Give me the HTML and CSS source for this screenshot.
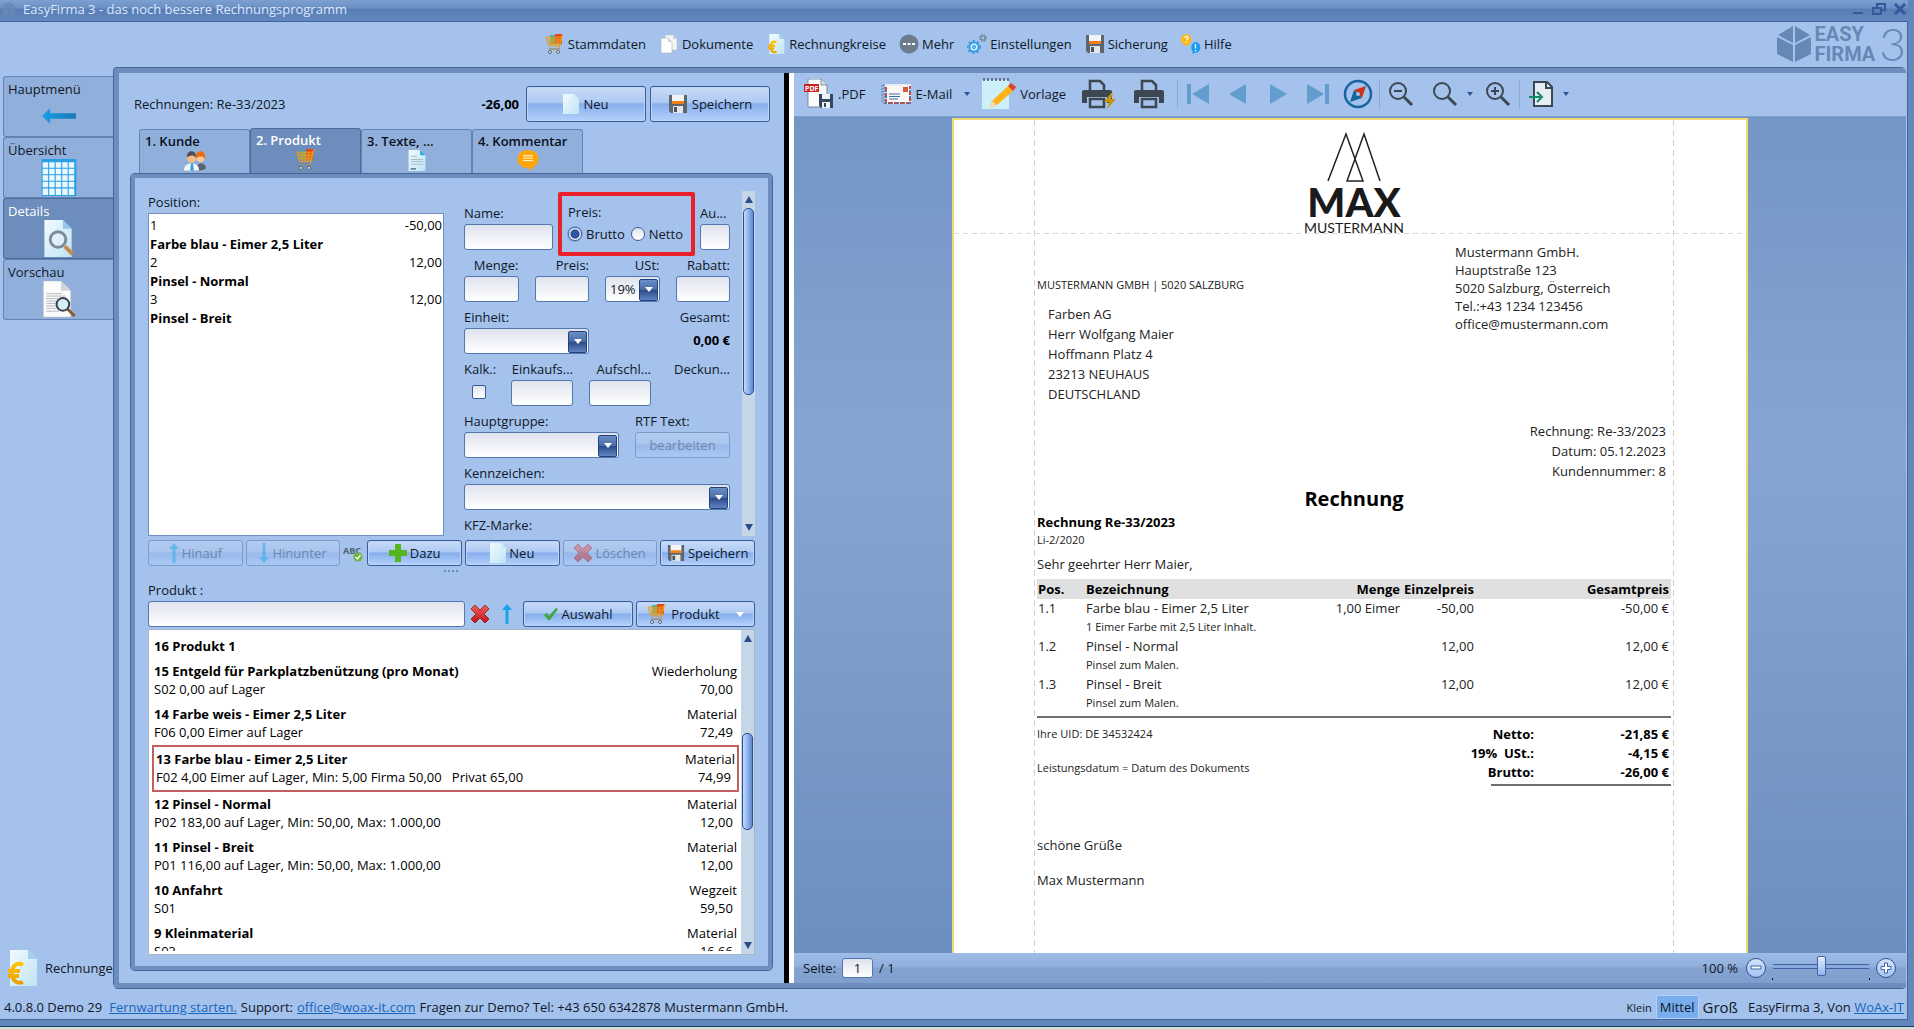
FILE: index.html
```html
<!DOCTYPE html>
<html lang="de">
<head>
    <meta charset="UTF-8">
    <meta name="viewport" content="width=device-width, initial-scale=1.0">
    <title>EasyFirma 3 - das noch bessere Rechnungsprogramm</title>
    <link rel="stylesheet" href="styles.css">
</head>
<body>
    <!-- Icons -->
    <svg class="sprite" width="0" height="0" aria-hidden="true">
        <defs>
            <linearGradient id="g-paper" x1="0" y1="0" x2="1" y2="1">
                <stop offset="0" stop-color="#f2fbff"/>
                <stop offset="1" stop-color="#bfe3f5"/>
            </linearGradient>
            <linearGradient id="g-gold" x1="0" y1="0" x2="0" y2="1">
                <stop offset="0" stop-color="#ffc400"/>
                <stop offset="1" stop-color="#e8a200"/>
            </linearGradient>
            <linearGradient id="g-arrow" x1="0" y1="0" x2="1" y2="0">
                <stop offset="0" stop-color="#1a9ee8"/>
                <stop offset="1" stop-color="#1679b8"/>
            </linearGradient>
            <linearGradient id="g-red" x1="0" y1="0" x2="0" y2="1">
                <stop offset="0" stop-color="#f0605c"/>
                <stop offset="1" stop-color="#c01414"/>
            </linearGradient>
        </defs>
        <symbol id="i-cart" viewBox="0 0 20 20">
            <path d="M5 1h6v9H5z" fill="#2fb3b0"/>
            <path d="M10 0h7v10h-7z" fill="#e8441c"/>
            <path d="M1 3h16l-2 9H4z" fill="#f5a623" fill-opacity=".35"/>
            <path d="M1 3h16l-2 9H4zM3 6h13M3 9h12M6 3l1 9M9 3v9M13 3l-1 9M19 1h-2l-3 14H4" fill="none" stroke="#e89a1c" stroke-width=".9"/>
            <path d="M4 15h11" stroke="#7b8794"/>
            <circle cx="5" cy="18" r="1.500" fill="#e6e9ed" stroke="#5b6672"/>
            <circle cx="13" cy="18" r="1.500" fill="#e6e9ed" stroke="#5b6672"/>
        </symbol>
        <symbol id="i-copy" viewBox="0 0 20 20">
            <path d="M6 1h8l4 4v11H6z" fill="#f4f5f6" stroke="#b5bac0" stroke-width=".6"/>
            <path d="M2 4h7l4 4v11H2z" fill="#fff" stroke="#a9afb6" stroke-width=".6"/>
            <path d="M9 4v4h4zM14 1v4h4z" fill="#cfd4da"/>
        </symbol>
        <symbol id="i-euro" viewBox="0 0 30 36">
            <path d="M3 0h18l9 9v27H3z" fill="url(#g-paper)"/>
            <path d="M21 0l9 9h-9z" fill="#9fd2ef"/>
            <path d="M16 15c-8-4-11 3-11 8s3 12 11 9M1 21h12M1 26h11" fill="none" stroke="url(#g-gold)" stroke-width="4"/>
        </symbol>
        <symbol id="i-more" viewBox="0 0 20 20">
            <circle cx="10" cy="10" r="9.500" fill="#6d7b8d"/>
            <path d="M4 9h3v2H4zM8.500 9h3v2h-3zM13 9h3v2h-3z" fill="#fff"/>
        </symbol>
        <symbol id="i-gears" viewBox="0 0 20 20">
            <circle cx="7" cy="13" r="4.500" fill="none" stroke="#2d9be0" stroke-width="2"/>
            <circle cx="7" cy="13" r="6.300" fill="none" stroke="#2d9be0" stroke-width="1.400" stroke-dasharray="2.300 2.300"/>
            <circle cx="7" cy="13" r="3.500" fill="#d6efff"/>
            <circle cx="7" cy="13" r="1.600" fill="#a4c2ec" stroke="#2d9be0"/>
            <circle cx="16" cy="4" r="2.200" fill="none" stroke="#76899e" stroke-width="1.600"/>
            <circle cx="16" cy="4" r="3.400" fill="none" stroke="#76899e" stroke-width="1.200" stroke-dasharray="1.400 1.300"/>
        </symbol>
        <symbol id="i-floppy" viewBox="0 0 20 20">
            <path d="M1 1h18v18H3l-2-2z" fill="#5d6670"/>
            <path d="M4 1h12v9H4z" fill="#f1f3f5"/>
            <path d="M4 7h12v3H4z" fill="#ef7d1a"/>
            <path d="M5 12h10v7H5z" fill="#e3e6ea"/>
            <path d="M6 13h3v5H6z" fill="#4b535c"/>
        </symbol>
        <symbol id="i-page" viewBox="0 0 16 20">
            <path d="M0 0h11l5 5v15H0z" fill="url(#g-paper)"/>
            <path d="M11 0l5 5h-5z" fill="#cfeaf8"/>
        </symbol>
        <symbol id="i-text" viewBox="0 0 16 20">
            <path d="M0 0h11l5 5v15H0z" fill="url(#g-paper)"/>
            <path d="M11 0l5 5h-5z" fill="#2aa7e6"/>
            <path d="M2 6h6M2 9h12M2 11h12M2 13.500h12" stroke="#9bb4c4" stroke-width=".8"/>
            <path d="M2 18h5" stroke="#31424f"/>
        </symbol>
        <symbol id="i-people" viewBox="0 0 22 20">
            <path d="M12 20c0-5 2-7 5-7s5 2 5 5c-3 2-6 2-10 2z" fill="#59636e"/>
            <circle cx="16.500" cy="7" r="4.500" fill="#fbc995"/>
            <path d="M12 6c0-7 9-7 9 0v3l-2-3-4 0-3 2z" fill="#f06a0c"/>
            <path d="M0 20c0-5 3-7 7.500-7s7.500 2 7.500 7z" fill="#f3f7fa"/>
            <path d="M7 13h2l.8 7H6.200z" fill="#2b9de0"/>
            <circle cx="7.500" cy="7.500" r="4.500" fill="#f7bb84"/>
            <path d="M3 6c0-7 9-7 9 0l-1 1c0-3-7-2-7 0z" fill="#4d4f55"/>
        </symbol>
        <symbol id="i-comment" viewBox="0 0 22 22">
            <path d="M11 0C4 0 0 4 0 9.500S4 19 12 19l3 3 1-4c4-1 6-5 6-8.500C22 4 18 0 11 0z" fill="#ffa60a"/>
            <path d="M6 6h10M6 8.500h10M6 11h10" stroke="#fff"/>
        </symbol>
        <symbol id="i-left" viewBox="0 0 38 18">
            <path d="M9 0v6h29v6H9v6L0 9z" fill="url(#g-arrow)"/>
        </symbol>
        <symbol id="i-grid" viewBox="0 0 32 34">
            <path d="M0 0h32v34H0z" fill="#2a9fe6"/>
            <path d="M1 3h5v5H1zM7 3h5v5H7zM13 3h5v5h-5zM19 3h5v5h-5zM25 3h5v5h-5zM1 9h5v5H1zM7 9h5v5H7zM13 9h5v5h-5zM19 9h5v5h-5zM25 9h5v5h-5zM1 15h5v5H1zM7 15h5v5H7zM13 15h5v5h-5zM19 15h5v5h-5zM25 15h5v5h-5zM1 21h5v5H1zM7 21h5v5H7zM13 21h5v5h-5zM19 21h5v5h-5zM25 21h5v5h-5zM1 27h5v6H1zM7 27h5v6H7zM13 27h5v6h-5zM19 27h5v6h-5zM25 27h5v6h-5z" fill="#e9f8ff"/>
        </symbol>
        <symbol id="i-details" viewBox="0 0 32 38">
            <path d="M1 0h19l9 9v29H1z" fill="url(#g-paper)"/>
            <path d="M20 0l9 9h-9z" fill="#8fc8ea"/>
            <path d="M22 27l8 8" stroke="#c98a45" stroke-width="4"/>
            <circle cx="15" cy="20" r="8" fill="#dceffb" stroke="#7e8b97" stroke-width="3"/>
        </symbol>
        <symbol id="i-preview" viewBox="0 0 34 38">
            <path d="M1 0h18l10 10v27H1z" fill="#fbfbfb" stroke="#c3c8cd" stroke-width=".6"/>
            <path d="M19 0l10 10H19z" fill="#d2d6da"/>
            <path d="M4 13h16M4 15.500h20M4 18h12M4 20.500h11M4 23h10M4 25.500h10M4 28h11M4 31h13" stroke="#b4b8bd"/>
            <path d="M25 28l8 8" stroke="#8a5a34" stroke-width="3"/>
            <circle cx="21" cy="24" r="6.500" fill="#d7edf8" stroke="#38424c" stroke-width="2"/>
        </symbol>
        <symbol id="i-up" viewBox="0 0 10 20">
            <path d="M5 0l5 6H6.500v14h-3V6H0z" fill="#1aa3e8"/>
        </symbol>
        <symbol id="i-down" viewBox="0 0 10 20">
            <path d="M5 20l5-6H6.500V0h-3v14H0z" fill="#1aa3e8"/>
        </symbol>
        <symbol id="i-plus" viewBox="0 0 18 18">
            <path d="M6 0h6v6h6v6h-6v6H6v-6H0V6h6z" fill="#54b51c"/>
        </symbol>
        <symbol id="i-cross" viewBox="0 0 18 18">
            <path d="M4 0l5 5 5-5 4 4-5 5 5 5-4 4-5-5-5 5-4-4 5-5-5-5z" fill="url(#g-red)" stroke="#8d1616" stroke-width=".8"/>
        </symbol>
        <symbol id="i-check" viewBox="0 0 14 12">
            <path d="M0 7l3-2 2 3 7-8 2 1-8 11H4z" fill="#3fa83c"/>
        </symbol>
        <symbol id="i-mail" viewBox="0 0 30 22">
            <path d="M1 2v18M3 1v20" stroke="#5c7599" stroke-dasharray="2 1"/>
            <path d="M5 2h24v18H5z" fill="#fdf8f4"/>
            <path d="M5 2h24v18H5z" fill="none" stroke="#e9eef5" stroke-width="2"/>
            <path d="M5 4v16h24V2" fill="none" stroke="#c7493b" stroke-width="2" stroke-dasharray="3 3"/>
            <path d="M5 7v13h24V5" fill="none" stroke="#5078b0" stroke-width="2" stroke-dasharray="2 4"/>
            <path d="M22 4h5v5h-5z" fill="#d9573c"/>
            <path d="M8 11h11M8 13.500h11M8 16h9" stroke="#3b6ea8"/>
        </symbol>
        <symbol id="i-notepad" viewBox="0 0 34 32">
            <path d="M0 2h27v29H0z" fill="#cdeffa"/>
            <path d="M2 3V0M6 3V0M10 3V0M14 3V0M18 3V0M22 3V0M26 3V0" stroke="#4b5966" stroke-width="1.500"/>
            <path d="M8 30l2-7L26 8l5 5-16 14z" fill="#ffb31a"/>
            <path d="M26 8l3-3 5 4-3 4z" fill="#e2431e"/>
            <path d="M8 30l2-7 5 4z" fill="#f5dcb3"/>
        </symbol>
        <symbol id="i-printer" viewBox="0 0 30 30">
            <path d="M8 12V2h10l4 4v6" fill="none" stroke="#3d4752" stroke-width="2.500"/>
            <path d="M0 13q0-2 2-2h26q2 0 2 2v11h-5v-6H5v6H0z" fill="#3d4752"/>
            <path d="M8 20h14v8H8z" fill="none" stroke="#3d4752" stroke-width="2.500"/>
        </symbol>
        <symbol id="i-bolt" viewBox="0 0 12 16">
            <path d="M7 0L0 9h5l-2 7 9-10H7l2-6z" fill="#c79410"/>
        </symbol>
        <symbol id="i-first" viewBox="0 0 24 20">
            <path d="M1 0h4v20H1zM23 0v20L6 10z" fill="#639dce"/>
        </symbol>
        <symbol id="i-prev" viewBox="0 0 18 20">
            <path d="M17 0v20L0 10z" fill="#639dce"/>
        </symbol>
        <symbol id="i-compass" viewBox="0 0 30 30">
            <circle cx="15" cy="15" r="13" fill="none" stroke="#1565a0" stroke-width="2.500"/>
            <path d="M23 7l-4 12-8-8z" fill="#c9341c"/>
            <path d="M7 23l4-12 8 8z" fill="#1565a0"/>
            <circle cx="15" cy="15" r="2" fill="#a4c2ec"/>
        </symbol>
        <symbol id="i-lens" viewBox="0 0 26 26">
            <circle cx="10" cy="10" r="8" fill="none" stroke="#3d4752" stroke-width="2"/>
            <path d="M16 16l8 8" stroke="#3d4752" stroke-width="3"/>
        </symbol>
        <symbol id="i-export" viewBox="0 0 24 26">
            <path d="M5 1h13l5 5v19H5z" fill="#e6edf5" stroke="#3d4752" stroke-width="2"/>
            <path d="M17 1v6h6" fill="none" stroke="#3d4752" stroke-width="2"/>
            <path d="M0 16h12M8 11l5 5-5 5" fill="none" stroke="#118a6c" stroke-width="2"/>
        </symbol>
        <symbol id="i-cube" viewBox="0 0 34 36">
            <path d="M16 0v17L1 9zM18 0v17l15-8zM0 11l16 8v17L0 28zM34 11l-16 8v17l16-8z" fill="#6688b4"/>
        </symbol>
    </svg>

    <div class="window">
        <header class="titlebar">
            <svg class="title-icon" viewBox="0 0 34 36"><use href="#i-cube"/></svg>
            <span class="title-text">EasyFirma 3 - das noch bessere Rechnungsprogramm</span>
            <div class="window-buttons">
                <button type="button" aria-label="Minimieren"><svg viewBox="0 0 14 12"><path d="M2 9h10v2H2z" fill="#35589a"/></svg></button>
                <button type="button" aria-label="Wiederherstellen"><svg viewBox="0 0 14 12"><path d="M5 4V1h8v6h-3M1 5h8v6H1z" fill="none" stroke="#35589a" stroke-width="2"/></svg></button>
                <button type="button" aria-label="Schließen"><svg viewBox="0 0 14 12"><path d="M2 1l10 10M12 1L2 11" stroke="#35589a" stroke-width="3"/></svg></button>
            </div>
        </header>

        <div class="menubar">
            <nav class="menu">
                <a href="#"><svg class="ic20"><use href="#i-cart"/></svg>Stammdaten</a>
                <a href="#"><svg class="ic20"><use href="#i-copy"/></svg>Dokumente</a>
                <a href="#"><svg class="ic20"><use href="#i-euro"/></svg>Rechnungkreise</a>
                <a href="#"><svg class="ic20"><use href="#i-more"/></svg>Mehr</a>
                <a href="#"><svg class="ic20"><use href="#i-gears"/></svg>Einstellungen</a>
                <a href="#"><svg class="ic20"><use href="#i-floppy"/></svg>Sicherung</a>
                <a href="#">
                    <svg class="ic20" viewBox="0 0 20 20" aria-hidden="true">
                        <path d="M5.500 0a5.500 5.500 0 1 0 0 11l1 2 1.500-3a5.500 5.500 0 0 0-2.500-10z" fill="#fdb813"/>
                        <path d="M14.500 8a5.500 5.500 0 1 1-1 11l-2 1V17a5.500 5.500 0 0 1 3-9z" fill="#1b9cf0"/>
                        <path d="M4 4q0-1.500 1.500-1.500T7 4q0 1-1.500 2M5.500 7.500v1.200M14.500 10v4.500M14.500 16v1.500" fill="none" stroke="#fff" stroke-width="1.300"/>
                    </svg>Hilfe</a>
            </nav>
            <div class="brand">
                <svg class="brand-cube"><use href="#i-cube"/></svg>
                <div class="brand-name"><span>EASY</span><span>FIRMA</span></div>
                <span class="brand-version">3</span>
            </div>
        </div>

        <div class="workspace">
            <aside class="sidebar">
                <a class="side-tab" href="#">Hauptmenü<svg class="side-icon side-arrow"><use href="#i-left"/></svg></a>
                <a class="side-tab" href="#">Übersicht<svg class="side-icon"><use href="#i-grid"/></svg></a>
                <a class="side-tab active" href="#">Details<svg class="side-icon"><use href="#i-details"/></svg></a>
                <a class="side-tab" href="#">Vorschau<svg class="side-icon"><use href="#i-preview"/></svg></a>
                <div class="side-current"><svg><use href="#i-euro"/></svg>Rechnungen</div>
            </aside>

            <main class="panel">
                <section class="editor">
                    <div class="editor-head">
                        <span>Rechnungen: Re-33/2023</span>
                        <strong>-26,00</strong>
                        <button class="btn btn-big" type="button"><svg class="ic-page"><use href="#i-page"/></svg>Neu</button>
                        <button class="btn btn-big" type="button"><svg class="ic20"><use href="#i-floppy"/></svg>Speichern</button>
                    </div>

                    <div class="tabs">
                        <button class="tab" type="button">1. Kunde<svg><use href="#i-people"/></svg></button>
                        <button class="tab active" type="button">2. Produkt<svg><use href="#i-cart"/></svg></button>
                        <button class="tab" type="button">3. Texte, ...<svg><use href="#i-text"/></svg></button>
                        <button class="tab" type="button">4. Kommentar<svg><use href="#i-comment"/></svg></button>
                    </div>

                    <div class="tab-body">
                        <div class="split">
                            <div class="positions">
                                <span class="lbl">Position:</span>
                                <ul class="position-list">
                                    <li><span>1</span><span>-50,00</span><b>Farbe blau - Eimer 2,5 Liter</b></li>
                                    <li><span>2</span><span>12,00</span><b>Pinsel - Normal</b></li>
                                    <li><span>3</span><span>12,00</span><b>Pinsel - Breit</b></li>
                                </ul>
                            </div>

                            <form class="fields">
                                <div class="row row-name">
                                    <label class="field">Name:<input type="text"></label>
                                    <fieldset class="price-mode">
                                        <legend>Preis:</legend>
                                        <label><input type="radio" name="preis" checked>Brutto</label>
                                        <label><input type="radio" name="preis">Netto</label>
                                    </fieldset>
                                    <label class="field">Au...<input type="text"></label>
                                </div>
                                <div class="row row-four">
                                    <label class="field right">Menge:<input type="text"></label>
                                    <label class="field right">Preis:<input type="text"></label>
                                    <label class="field right">USt:<span class="combo"><select><option>19%</option></select></span></label>
                                    <label class="field right">Rabatt:<input type="text"></label>
                                </div>
                                <div class="row row-unit">
                                    <label class="field">Einheit:<span class="combo"><select><option></option></select></span></label>
                                    <div class="field right">Gesamt:<output>0,00 €</output></div>
                                </div>
                                <div class="row row-calc">
                                    <label class="field">Kalk.:<input type="checkbox"></label>
                                    <label class="field right">Einkaufs...<input type="text"></label>
                                    <label class="field right">Aufschl...<input type="text"></label>
                                    <div class="field right">Deckun...</div>
                                </div>
                                <div class="row row-group">
                                    <label class="field">Hauptgruppe:<span class="combo"><select><option></option></select></span></label>
                                    <div class="field">RTF Text:<button class="btn" type="button" disabled>bearbeiten</button></div>
                                </div>
                                <div class="row">
                                    <label class="field">Kennzeichen:<span class="combo"><select><option></option></select></span></label>
                                </div>
                                <div class="row">
                                    <span class="field">KFZ-Marke:</span>
                                </div>
                            </form>
                            <div class="scrollbar"><i class="sb-up"></i><i class="sb-thumb"></i><i class="sb-down"></i></div>
                        </div>

                        <div class="actions">
                            <button class="btn" type="button" disabled><svg class="ic-arrow"><use href="#i-up"/></svg>Hinauf</button>
                            <button class="btn" type="button" disabled><svg class="ic-arrow"><use href="#i-down"/></svg>Hinunter</button>
                            <svg class="ic-abc" viewBox="0 0 21 17" aria-hidden="true">
                                <text x="0" y="9" font-size="9" font-weight="700" fill="#4f6274">ABC</text>
                                <circle cx="15" cy="12" r="4.500" fill="#6db33f"/>
                                <path d="M12.500 12l2 2 3-4" fill="none" stroke="#fff" stroke-width="1.300"/>
                            </svg>
                            <button class="btn" type="button"><svg class="ic18"><use href="#i-plus"/></svg>Dazu</button>
                            <button class="btn" type="button"><svg class="ic-page"><use href="#i-page"/></svg>Neu</button>
                            <button class="btn" type="button" disabled><svg class="ic18"><use href="#i-cross"/></svg>Löschen</button>
                            <button class="btn" type="button"><svg class="ic18"><use href="#i-floppy"/></svg>Speichern</button>
                        </div>
                        <div class="grip"></div>

                        <label class="lbl" for="produkt-suche">Produkt :</label>
                        <div class="search">
                            <input type="text" id="produkt-suche">
                            <button class="icon-btn" type="button" aria-label="Leeren"><svg class="ic18"><use href="#i-cross"/></svg></button>
                            <button class="icon-btn" type="button" aria-label="Nach oben"><svg class="ic-arrow"><use href="#i-up"/></svg></button>
                            <button class="btn btn-select" type="button"><svg class="ic-check"><use href="#i-check"/></svg>Auswahl</button>
                            <button class="btn btn-product" type="button"><svg class="ic20"><use href="#i-cart"/></svg>Produkt<i class="caret-white"></i></button>
                        </div>

                        <div class="products">
                            <ul class="product-list">
                                <li><b>16 Produkt 1</b></li>
                                <li><b>15 Entgeld für Parkplatzbenützung (pro Monat)</b><span>Wiederholung</span><span>S02 0,00 auf Lager</span><span class="price">70,00</span></li>
                                <li><b>14 Farbe weis - Eimer 2,5 Liter</b><span>Material</span><span>F06 0,00 Eimer auf Lager</span><span class="price">72,49</span></li>
                                <li class="selected"><b>13 Farbe blau - Eimer 2,5 Liter</b><span>Material</span><span>F02 4,00 Eimer auf Lager, Min: 5,00 Firma 50,00 &nbsp; Privat 65,00</span><span class="price">74,99</span></li>
                                <li><b>12 Pinsel - Normal</b><span>Material</span><span>P02 183,00 auf Lager, Min: 50,00, Max: 1.000,00</span><span class="price">12,00</span></li>
                                <li><b>11 Pinsel - Breit</b><span>Material</span><span>P01 116,00 auf Lager, Min: 50,00, Max: 1.000,00</span><span class="price">12,00</span></li>
                                <li><b>10 Anfahrt</b><span>Wegzeit</span><span>S01</span><span class="price">59,50</span></li>
                                <li><b>9 Kleinmaterial</b><span>Material</span><span>S03</span><span class="price">16,66</span></li>
                            </ul>
                            <div class="scrollbar"><i class="sb-up"></i><i class="sb-space"></i><i class="sb-thumb small"></i><i class="sb-space wide"></i><i class="sb-down"></i></div>
                        </div>
                    </div>
                </section>

                <div class="splitter"></div>

                <section class="viewer">
                    <div class="toolbar">
                        <button type="button">
                            <svg class="ic30" viewBox="0 0 30 30" aria-hidden="true">
                                <path d="M4 0h13l6 6v22H4z" fill="#fafbfc" stroke="#6d747b" stroke-width=".8"/>
                                <path d="M17 0v6h6" fill="#dfe3e6" stroke="#6d747b" stroke-width=".8"/>
                                <path d="M0 5h15v8H0z" fill="#cc2222"/>
                                <text x="1" y="12" font-size="7" font-weight="700" fill="#fff">PDF</text>
                                <path d="M15 15h14v14H17l-2-2z" fill="#34495e"/>
                                <path d="M18 15h8v5h-8zM18 23h8v6h-8z" fill="#eef1f4"/>
                                <path d="M20 24h2v4h-2z" fill="#34495e"/>
                            </svg>.PDF</button>
                        <button type="button" class="tb-mail"><svg class="ic30"><use href="#i-mail"/></svg>E-Mail<i class="caret"></i></button>
                        <button type="button"><svg class="ic34"><use href="#i-notepad"/></svg>Vorlage</button>
                        <button type="button" class="tb-quick" aria-label="Schnelldruck"><svg class="ic30"><use href="#i-printer"/></svg><svg class="bolt"><use href="#i-bolt"/></svg></button>
                        <button type="button" class="tb-print" aria-label="Drucken"><svg class="ic30"><use href="#i-printer"/></svg></button>
                        <span class="sep"></span>
                        <div class="pager">
                            <button type="button" aria-label="Erste Seite"><svg class="ic-nav"><use href="#i-first"/></svg></button>
                            <button type="button" aria-label="Vorige Seite"><svg class="ic-nav"><use href="#i-prev"/></svg></button>
                            <button type="button" class="flip" aria-label="Nächste Seite"><svg class="ic-nav"><use href="#i-prev"/></svg></button>
                            <button type="button" class="flip" aria-label="Letzte Seite"><svg class="ic-nav"><use href="#i-first"/></svg></button>
                        </div>
                        <button type="button" class="tb-nav" aria-label="Navigation"><svg class="ic30"><use href="#i-compass"/></svg></button>
                        <span class="sep"></span>
                        <div class="zoom-tools">
                            <button type="button" aria-label="Verkleinern"><svg class="ic26" viewBox="0 0 26 26"><use href="#i-lens"/><path d="M6 10h8" stroke="#3d4752" stroke-width="2"/></svg></button>
                            <button type="button" aria-label="Zoom"><svg class="ic26"><use href="#i-lens"/></svg><i class="caret"></i></button>
                            <button type="button" aria-label="Vergrößern"><svg class="ic26" viewBox="0 0 26 26"><use href="#i-lens"/><path d="M6 10h8M10 6v8" stroke="#3d4752" stroke-width="2"/></svg></button>
                        </div>
                        <span class="sep"></span>
                        <button type="button" aria-label="Exportieren"><svg class="ic26"><use href="#i-export"/></svg><i class="caret"></i></button>
                    </div>

                    <div class="canvas">
                        <article class="paper">
                            <div class="letterhead">
                                <svg class="peaks" viewBox="0 0 56 50"><path d="M2 49L20 2l17 47H21L38 2l16 47" fill="none" stroke="#222" stroke-width="1.500"/></svg>
                                <span class="max">MAX</span>
                                <span class="max-sub">MUSTERMANN</span>
                            </div>
                            <div class="letter">
                                <div class="addresses">
                                    <div class="recipient">
                                        <p class="sender-line">MUSTERMANN GMBH | 5020 SALZBURG</p>
                                        <address>Farben AG<br>Herr Wolfgang Maier<br>Hoffmann Platz 4<br>23213 NEUHAUS<br>DEUTSCHLAND</address>
                                    </div>
                                    <address class="sender">Mustermann GmbH.<br>Hauptstraße 123<br>5020 Salzburg, Österreich<br>Tel.:+43 1234 123456<br>office@mustermann.com</address>
                                </div>
                                <p class="meta">Rechnung: Re-33/2023<br>Datum: 05.12.2023<br>Kundennummer: 8</p>
                                <h1>Rechnung</h1>
                                <h2>Rechnung Re-33/2023</h2>
                                <p class="small">Li-2/2020</p>
                                <p class="greeting">Sehr geehrter Herr Maier,</p>
                                <table class="items">
                                    <thead>
                                        <tr><th class="c-pos">Pos.</th><th>Bezeichnung</th><th class="c-qty">Menge</th><th class="c-unit">Einzelpreis</th><th class="c-sum">Gesamtpreis</th></tr>
                                    </thead>
                                    <tbody>
                                        <tr><td>1.1</td><td>Farbe blau - Eimer 2,5 Liter</td><td class="num">1,00 Eimer</td><td class="num">-50,00</td><td class="num">-50,00 €</td></tr>
                                        <tr class="small"><td></td><td colspan="4">1 Eimer Farbe mit 2,5 Liter Inhalt.</td></tr>
                                        <tr><td>1.2</td><td>Pinsel - Normal</td><td></td><td class="num">12,00</td><td class="num">12,00 €</td></tr>
                                        <tr class="small"><td></td><td colspan="4">Pinsel zum Malen.</td></tr>
                                        <tr><td>1.3</td><td>Pinsel - Breit</td><td></td><td class="num">12,00</td><td class="num">12,00 €</td></tr>
                                        <tr class="small"><td></td><td colspan="4">Pinsel zum Malen.</td></tr>
                                    </tbody>
                                </table>
                                <div class="summary">
                                    <div class="notes">
                                        <p>Ihre UID: DE 34532424</p>
                                        <p>Leistungsdatum = Datum des Dokuments</p>
                                    </div>
                                    <div class="totals">
                                        <table>
                                            <tr><th>Netto:</th><td>-21,85 €</td></tr>
                                            <tr><th>19% &nbsp;USt.:</th><td>-4,15 €</td></tr>
                                            <tr><th>Brutto:</th><td>-26,00 €</td></tr>
                                        </table>
                                        <hr>
                                    </div>
                                </div>
                                <p class="closing">schöne Grüße</p>
                                <p class="closing-name">Max Mustermann</p>
                            </div>
                        </article>
                    </div>

                    <div class="pagebar">
                        <label for="seite">Seite:</label>
                        <input type="text" id="seite" value="1">
                        <span>/ 1</span>
                        <span class="zoom-value">100 %</span>
                        <button class="round" type="button" aria-label="Kleiner"><svg viewBox="0 0 12 12"><path d="M1 4h10v3H1z"/></svg></button>
                        <div class="slider"><input type="range" min="0" max="200" value="100" aria-label="Zoom"></div>
                        <button class="round" type="button" aria-label="Größer"><svg viewBox="0 0 12 12"><path d="M4.500 1h3v3.500H11v3H7.500V11h-3V7.500H1v-3h3.500z"/></svg></button>
                    </div>
                </section>
            </main>
        </div>

        <footer class="statusbar">
            <span>4.0.8.0 Demo 29</span>
            <a href="#">Fernwartung starten.</a>
            <span>Support:</span>
            <a href="#">office@woax-it.com</a>
            <span>Fragen zur Demo? Tel: +43 650 6342878 Mustermann GmbH.</span>
            <div class="sizes">
                <button class="size-s" type="button">Klein</button>
                <button class="size-m" type="button">Mittel</button>
                <button class="size-l" type="button">Groß</button>
            </div>
            <span class="vendor">EasyFirma 3, Von <a href="#">WoAx-IT</a></span>
        </footer>
    </div>
</body>
</html>
```

FILE: styles.css
```css
* {
    margin: 0;
    padding: 0;
    box-sizing: border-box;
}

body {
    height: 100vh;
    font-family: 'Open Sans', 'Noto Sans', sans-serif;
    font-size: 13px;
    line-height: 18px;
    color: #101828;
    background-color: #cbe8d0;
    padding-bottom: 3px;
}

a {
    color: #1766c0;
}

button,
input,
select {
    font: inherit;
    color: inherit;
}

button {
    white-space: nowrap;
}

ul {
    list-style: none;
}

.sprite {
    position: absolute;
}

.window {
    height: 100%;
    display: flex;
    flex-direction: column;
    background-color: #a4c2ec;
    border-right: 6px solid #6387bd;
    border-bottom: 6px solid #6387bd;
    box-shadow: inset -1px -1px 0 #46659b, 0 1px 0 #1c3a70;
    overflow: hidden;
}

/* Titelleiste */
.titlebar {
    display: flex;
    align-items: center;
    flex: none;
    height: 22px;
    margin-right: -6px;
    padding: 0 7px 4px 2px;
    color: #dbe8fa;
    background: linear-gradient(#7ba0d0 0, #6b90c5 8px, #587db6 9px, #6489c0 100%);
    border-bottom: 1px solid #41639c;
}

.title-icon {
    width: 14px;
    height: 14px;
    margin-right: 7px;
}

.window-buttons {
    margin-left: auto;
    display: flex;
    gap: 7px;
}

.window-buttons button {
    border: 0;
    background: none;
    width: 14px;
    height: 12px;
}

.window-buttons svg {
    display: block;
    width: 14px;
    height: 12px;
}

/* Menü */
.menubar {
    display: flex;
    align-items: center;
    flex: none;
    height: 46px;
    padding: 0 2px 2px 0;
}

.menu {
    flex: 1;
    display: flex;
    justify-content: center;
    gap: 13px;
}

.menu a {
    display: flex;
    align-items: center;
    gap: 3px;
    color: inherit;
    text-decoration: none;
}

.ic18 { width: 18px; height: 18px; }
.ic20 { width: 20px; height: 20px; }
.ic26 { width: 26px; height: 26px; }
.ic30 { width: 30px; height: 30px; }
.ic34 { width: 34px; height: 32px; }
.ic-page { width: 16px; height: 20px; }
.ic-arrow { width: 10px; height: 20px; }
.ic-check { width: 14px; height: 12px; }
.ic-nav { width: 24px; height: 20px; }
.ic-abc { width: 21px; height: 17px; }

.brand {
    display: flex;
    align-items: center;
    gap: 4px;
    color: #6688b4;
}

.brand-cube {
    width: 34px;
    height: 36px;
}

.brand-name {
    display: flex;
    flex-direction: column;
    font-family: Roboto, sans-serif;
    font-weight: 700;
    font-size: 20px;
    line-height: 20px;
}

.brand-version {
    font-family: Lato, sans-serif;
    font-weight: 300;
    font-size: 46px;
    line-height: 46px;
}

/* Seitenleiste */
.workspace {
    flex: 1;
    min-height: 0;
    display: flex;
}

.sidebar {
    flex: none;
    width: 114px;
    padding: 8px 0 2px 3px;
    display: flex;
    flex-direction: column;
    overflow: hidden;
}

.side-tab {
    display: flex;
    flex-direction: column;
    height: 61px;
    padding: 3px 4px 0;
    color: inherit;
    text-decoration: none;
    background-color: #91afdb;
    border: 1px solid #6383b5;
    border-right: 0;
    border-radius: 3px 0 0 3px;
}

.side-tab.active {
    color: #fff;
    background-color: #6d8dbc;
    border-color: #4c6a9c;
}

.side-icon {
    width: 36px;
    height: 37px;
    align-self: center;
}

.side-arrow {
    height: 16px;
    margin-top: 10px;
}

.side-current {
    margin-top: auto;
    display: flex;
    align-items: center;
    gap: 8px;
    padding-left: 4px;
}

.side-current svg {
    flex: none;
    width: 30px;
    height: 36px;
}

.panel {
    flex: 1;
    min-width: 0;
    display: grid;
    grid-template-columns: minmax(0, 665fr) 10px minmax(0, 1112fr);
    grid-template-rows: minmax(0, 1fr);
    margin-right: 2px;
    border: 5px solid #6d8dbc;
    border-right: 0;
    border-radius: 4px;
    box-shadow: -1px -1px 0 #46659b, 0 1px 0 #46659b;
}

.splitter {
    border-left: 5px solid #000;
    background-color: #fff;
}

/* Buttons und Felder */
.btn {
    display: flex;
    align-items: center;
    justify-content: center;
    gap: 4px;
    height: 26px;
    border: 1px solid #3c5c98;
    border-radius: 3px;
    box-shadow: inset 0 0 0 1px #bcd5fa;
    background: linear-gradient(#c9dbf7 0, #aecaf4 45%, #86aeec 50%, #b4d1fb 100%);
}

.btn:disabled {
    color: #6f86ab;
    border-color: #7d9bcb;
    background: linear-gradient(#b3cbf0 0, #a9c5ef 45%, #98b9ea 50%, #a9c8f5 100%);
    box-shadow: none;
}

.btn:disabled svg {
    opacity: .45;
}

.icon-btn {
    display: flex;
    align-items: center;
    border: 0;
    background: none;
}

input[type="text"],
select {
    display: block;
    width: 100%;
    height: 26px;
    border: 1px solid #5577b0;
    border-radius: 3px;
    background: linear-gradient(#dfe3ee, #fff);
    padding: 0 4px;
    min-width: 0;
}

select {
    appearance: none;
}

.combo {
    position: relative;
    display: block;
    width: 100%;
}

.combo::before {
    content: '';
    position: absolute;
    top: 3px;
    right: 2px;
    width: 17px;
    height: 20px;
    border: 1px solid #23417a;
    border-radius: 2px;
    background: linear-gradient(#6a8fc8 0, #4a6ba6 48%, #2c4b88 52%, #5f86c2 100%);
    pointer-events: none;
}

.combo::after {
    content: '';
    position: absolute;
    top: 11px;
    right: 7px;
    border: 4px solid transparent;
    border-top: 5px solid #fff;
    border-bottom: 0;
    pointer-events: none;
}

/* Bearbeitung */
.editor {
    display: flex;
    flex-direction: column;
    padding: 13px 12px;
    min-height: 0;
}

.editor-head {
    display: flex;
    align-items: center;
    gap: 4px;
    padding-left: 3px;
    margin-right: 2px;
}

.editor-head strong {
    margin-left: auto;
    margin-right: 3px;
    color: #000;
}

.btn-big {
    width: 120px;
    height: 36px;
}

.tabs {
    display: flex;
    align-items: flex-end;
    margin-top: 6px;
    padding-left: 8px;
}

.tab {
    display: flex;
    flex-direction: column;
    align-items: flex-start;
    width: 111px;
    height: 45px;
    padding: 2px 5px 0;
    font-weight: 600;
    color: #0a1020;
    background-color: #91afdb;
    border: 1px solid #6383b5;
    border-bottom: 0;
    border-radius: 3px 3px 0 0;
}

.tab.active {
    height: 46px;
    color: #fff;
    background-color: #6d8dbc;
    border-color: #4c6a9c;
}

.tab svg {
    width: 22px;
    height: 21px;
    align-self: center;
}

.tab-body {
    flex: 1;
    min-height: 0;
    display: flex;
    flex-direction: column;
    padding: 13px 13px 11px;
    border: 4px solid #6d8dbc;
    border-radius: 4px;
    box-shadow: 0 0 0 1px #46659b;
}

.split {
    flex: 346 1 0;
    min-height: 0;
    display: flex;
}

.positions {
    flex: 296;
    min-width: 0;
    display: flex;
    flex-direction: column;
    margin-right: 20px;
}

.lbl {
    display: block;
    line-height: 22px;
}

.position-list {
    flex: 1;
    padding: 2px 1px;
    background-color: #fff;
    border: 1px solid #7090c4;
    color: #000;
}

.position-list li {
    display: grid;
    grid-template-columns: 1fr auto;
    line-height: 19px;
}

.position-list b {
    grid-column: 1 / 3;
    line-height: 18px;
}

.fields {
    flex: 266;
    min-width: 0;
    display: flex;
    flex-direction: column;
    overflow: hidden;
    padding-top: 13px;
    gap: 6px;
}

.row {
    display: grid;
    gap: 16px;
    flex: none;
}

.field {
    display: flex;
    flex-direction: column;
    gap: 2px;
    min-width: 0;
    white-space: nowrap;
}

.field.right {
    align-items: flex-end;
}

.field output {
    line-height: 24px;
    font-weight: 700;
    color: #000;
}

.row-name {
    grid-template-columns: 88fr 137px 30px;
    gap: 5px;
}

.price-mode {
    display: flex;
    flex-wrap: wrap;
    align-items: center;
    align-content: flex-start;
    column-gap: 6px;
    margin: -12px 0 -6px;
    padding: 7px 2px 0 6px;
    border: 4px solid #e8202a;
    border-radius: 2px;
}

.price-mode legend {
    float: left;
    width: 100%;
    margin-bottom: 4px;
}

.price-mode label {
    display: flex;
    align-items: center;
    gap: 4px;
}

.row-four {
    grid-template-columns: repeat(4, 1fr);
}

.row-unit {
    grid-template-columns: 125fr 125fr;
}

.row-calc {
    grid-template-columns: 31fr 62fr 62fr 63fr;
}

.row-group {
    grid-template-columns: 155fr 95fr;
}

.fields .btn {
    width: 100%;
}

input[type="radio"],
input[type="checkbox"] {
    appearance: none;
    width: 14px;
    height: 14px;
    border: 1px solid #3c5c98;
    background: linear-gradient(#dfe3ee, #fff);
}

input[type="checkbox"] {
    border-radius: 2px;
    margin: 5px 8px;
}

input[type="radio"] {
    border-radius: 50%;
}

input[type="radio"]:checked {
    background: radial-gradient(#2f56a8 0 3px, #23427f 4px, #e8edf7 5px);
    box-shadow: 0 0 0 1px #7ba2e0;
}

.scrollbar {
    flex: none;
    width: 13px;
    margin-left: 12px;
    display: flex;
    flex-direction: column;
    align-items: center;
    background-color: #c5d6e6;
}

.sb-up,
.sb-down {
    flex: none;
    border: 4px solid transparent;
}

.sb-up {
    border-top: 0;
    border-bottom: 7px solid #2c4b88;
    margin: 5px 0;
}

.sb-down {
    border-bottom: 0;
    border-top: 7px solid #2c4b88;
    margin: auto 0 5px;
}

.sb-thumb {
    width: 11px;
    height: 54%;
    border: 1px solid #2c4f94;
    border-radius: 5px;
    background: linear-gradient(90deg, #c6dafa, #8fb3ec 50%, #5f88cc);
}

.actions {
    display: flex;
    align-items: center;
    gap: 3px;
    margin-top: 4px;
}

.actions .btn {
    flex: 1 1 0;
    min-width: 0;
    gap: 3px;
}

.grip {
    align-self: center;
    width: 15px;
    height: 2px;
    margin: 4px 0 7px;
    background: repeating-linear-gradient(90deg, #6b8bbd 0 2px, transparent 2px 4px);
}

.search {
    display: flex;
    align-items: center;
    gap: 3px;
}

.search input {
    flex: 1;
}

.search .icon-btn {
    flex: none;
    justify-content: center;
    width: 24px;
}

.btn-select {
    width: 110px;
    margin-left: 1px;
}

.btn-product {
    width: 119px;
}

.caret-white {
    margin-left: 12px;
    border: 4px solid transparent;
    border-top: 5px solid #fff;
    border-bottom: 0;
}

.products {
    flex: 324 1 0;
    min-height: 0;
    display: flex;
    margin-top: 2px;
    background-color: #fff;
    border: 1px solid #a9b4c4;
    overflow: hidden;
}

.product-list {
    flex: 1;
    padding: 4px 2px 0 3px;
    border-bottom: 3px solid #fff;
    color: #000;
    overflow: hidden;
}

.product-list li {
    display: grid;
    grid-template-columns: 1fr auto;
    padding: 3px 2px 4px;
}

.product-list li span:nth-child(even) {
    text-align: right;
}

.product-list .price {
    padding-right: 4px;
}

.product-list .selected {
    border: 2px solid #c0605f;
}

.products .scrollbar {
    margin-left: 0;
}

.sb-space {
    flex: 80;
}

.sb-space.wide {
    flex: 105;
}

.sb-thumb.small {
    height: 30%;
}

/* Vorschau */
.viewer {
    display: flex;
    flex-direction: column;
    min-height: 0;
}

.toolbar {
    flex: none;
    display: flex;
    align-items: center;
    height: 44px;
    padding: 0 0 2px 10px;
    border-bottom: 1px solid #7e9fce;
}

.toolbar button {
    display: flex;
    align-items: center;
    gap: 4px;
    border: 0;
    background: none;
    margin-right: 16px;
}

.toolbar .tb-mail {
    margin-right: 12px;
}

.toolbar .tb-quick {
    position: relative;
    margin-right: 12px;
    padding-right: 10px;
}

.toolbar .tb-print {
    margin-right: 13px;
}

.toolbar .tb-nav {
    margin-right: 6px;
}

.bolt {
    position: absolute;
    right: 5px;
    bottom: 0;
    width: 14px;
    height: 16px;
}

.caret {
    margin-left: 5px;
    border: 3px solid transparent;
    border-top: 4px solid #33509a;
    border-bottom: 0;
}

.tb-mail .caret {
    margin-left: 8px;
}

.sep {
    width: 1px;
    height: 28px;
    background-color: #8aa9d8;
    margin-right: 8px;
}

.pager {
    display: flex;
    gap: 16px;
    margin-right: 13px;
}

.toolbar .pager button {
    margin: 0;
}

.flip {
    transform: scaleX(-1);
}

.zoom-tools {
    display: flex;
}

.toolbar .zoom-tools button {
    margin-right: 12px;
}

.toolbar .zoom-tools button:first-child {
    margin-right: 18px;
}

.toolbar .zoom-tools button:last-child {
    margin-right: 8px;
}

.canvas {
    flex: 1;
    min-height: 0;
    overflow: hidden;
    display: flex;
    justify-content: center;
    padding-top: 1px;
    background: linear-gradient(#7496c5, #86a5d2 40%, #6d8fbd);
}

.paper {
    position: relative;
    width: 796px;
    min-height: 100%;
    background-color: #fff;
    border: 2px solid #f2d872;
    border-bottom: 0;
    color: #222;
}

/* Seitenränder */
.paper::before {
    content: '';
    position: absolute;
    top: 0;
    bottom: 0;
    left: 80px;
    width: 640px;
    background:
        repeating-linear-gradient(#d0d0d0 0 6px, transparent 6px 10px) left / 1px 100% no-repeat,
        repeating-linear-gradient(#d0d0d0 0 6px, transparent 6px 10px) right / 1px 100% no-repeat;
}

.letterhead {
    display: flex;
    flex-direction: column;
    align-items: center;
    height: 114px;
    padding: 12px 0 0 8px;
    color: #1a1a1a;
    background: repeating-linear-gradient(90deg, #d8d8d8 0 5px, transparent 5px 9px) bottom / 100% 1px no-repeat;
    font-family: Lato, sans-serif;
}

.peaks {
    width: 56px;
    height: 50px;
    flex: none;
}

.max {
    font-weight: 900;
    font-size: 40px;
    line-height: 40px;
}

.max-sub {
    font-size: 14px;
    line-height: 12px;
}

.letter {
    position: relative;
    margin: 0 75px 0 82px;
    padding: 9px 0 0 1px;
}

address {
    font-style: normal;
}

.addresses {
    display: flex;
    justify-content: space-between;
}

.recipient {
    padding-top: 33px;
}

.recipient address {
    line-height: 20px;
    padding: 10px 0 0 11px;
}

.sender-line,
.small,
.notes {
    font-size: 11px;
}

.sender {
    width: 216px;
}

.meta {
    text-align: right;
    line-height: 20px;
    padding: 17px 5px 0 0;
}

.letter h1 {
    text-align: center;
    font-size: 20px;
    line-height: 28px;
    margin-top: 4px;
    color: #000;
}

.letter h2 {
    font-size: 13px;
    line-height: 18px;
    color: #000;
}

.greeting {
    padding: 6px 0;
}

.items {
    width: 100%;
    border-collapse: collapse;
    table-layout: fixed;
    border-bottom: 2px solid #707070;
}

.items th {
    background-color: #e0e0e0;
    color: #000;
    text-align: left;
    height: 20px;
}

.items th,
.items td {
    padding: 0 2px 1px 1px;
    line-height: 18px;
    white-space: nowrap;
}

.items tbody tr:last-child td {
    padding-bottom: 4px;
}

.items .c-pos { width: 48px; }
.items .c-qty { width: 90px; text-align: right; }
.items .c-unit { width: 74px; text-align: right; }
.items .c-sum { width: 195px; text-align: right; }

.num {
    text-align: right;
}

.summary {
    display: flex;
    justify-content: space-between;
    align-items: flex-start;
    padding-top: 7px;
}

.notes p {
    line-height: 18px;
    margin-bottom: 16px;
}

.totals table {
    border-collapse: collapse;
    font-weight: 700;
    text-align: right;
    color: #000;
}

.totals th,
.totals td {
    padding: 0 2px 1px;
}

.totals td {
    width: 135px;
}

.totals hr {
    width: 180px;
    height: 2px;
    margin: 2px 0 0 auto;
    border: 0;
    background-color: #707070;
}

.closing {
    padding-top: 43px;
}

.closing-name {
    padding-top: 17px;
}

.pagebar {
    flex: none;
    display: flex;
    align-items: center;
    height: 30px;
    padding: 0 10px 0 9px;
    background: linear-gradient(#9dbce8 0, #90afdb 45%, #84a3d0 50%, #809fcc 100%);
}

.pagebar input[type="text"] {
    width: 31px;
    height: 20px;
    margin: 0 6px;
    text-align: center;
}

.zoom-value {
    margin-left: auto;
    margin-right: 8px;
}

.round {
    display: flex;
    align-items: center;
    justify-content: center;
    width: 20px;
    height: 20px;
    border: 1px solid #2f5294;
    border-radius: 50%;
    background: linear-gradient(#d3e2fa, #a4c4f5);
}

.round svg {
    flex: none;
    width: 12px;
    height: 12px;
    fill: #fff;
    stroke: #3f62a3;
    stroke-width: 1px;
}

.slider {
    width: 98px;
    height: 24px;
    margin: 0 6px;
    border: solid #101828;
    border-width: 0 1px;
    border-image: linear-gradient(transparent 88%, #101828 88%) 1;
}

.slider input {
    appearance: none;
    display: block;
    width: 100%;
    height: 20px;
    background: linear-gradient(transparent 8px, #3f62a3 8px 9px, #88aae0 9px 12px, #3f62a3 12px 13px, transparent 13px);
}

.slider input::-webkit-slider-thumb {
    appearance: none;
    width: 9px;
    height: 20px;
    border: 1px solid #3f62a3;
    border-radius: 2px;
    background: linear-gradient(#e3edfc, #8fb5f0);
}

/* Statusleiste */
.statusbar {
    flex: none;
    display: flex;
    align-items: center;
    gap: 4px;
    height: 32px;
    padding: 5px 4px 0;
    white-space: nowrap;
}

.statusbar > a:first-of-type {
    margin-left: 3px;
}

.sizes {
    margin-left: auto;
    display: flex;
    align-items: center;
}

.sizes button {
    border: 1px solid transparent;
    background: none;
    height: 24px;
    padding: 0 3px;
}

.sizes .size-s {
    font-size: 11px;
    padding-top: 2px;
}

.sizes .size-m {
    background-color: #78aeee;
    border-color: #b5d0f5;
}

.sizes .size-l {
    font-size: 15px;
}

.vendor {
    margin-left: 2px;
}
```
